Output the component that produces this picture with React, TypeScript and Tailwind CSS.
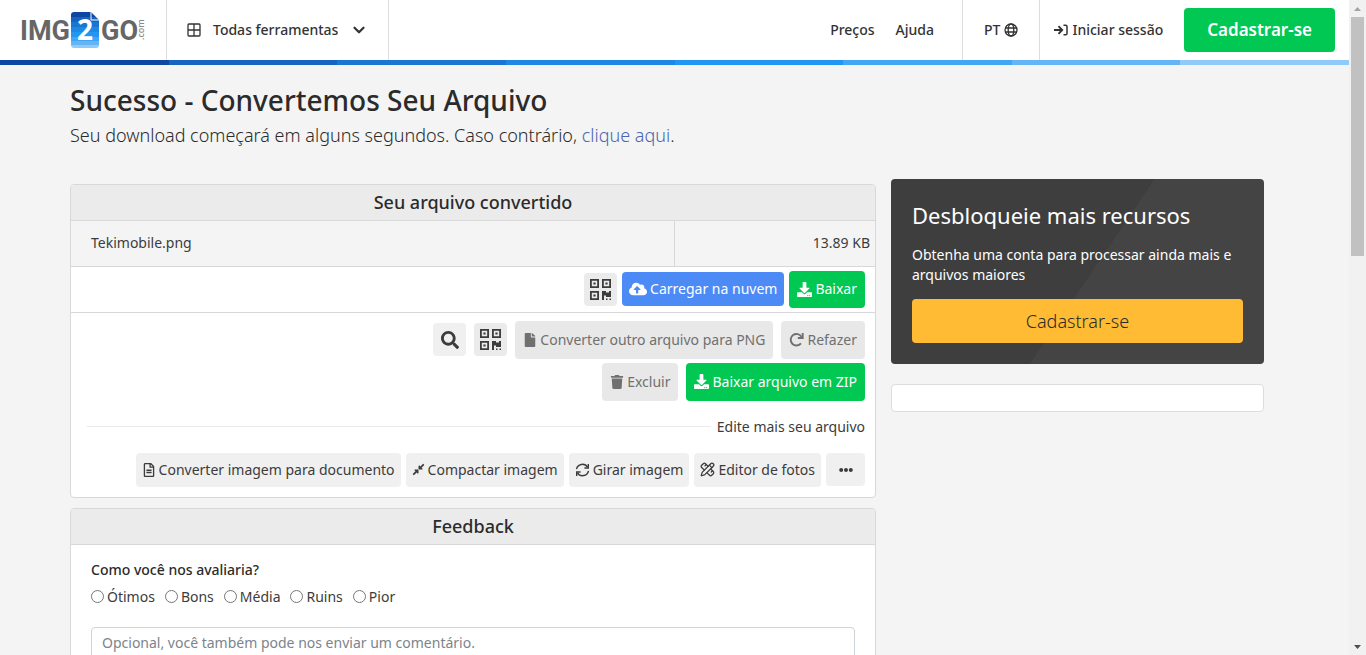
import type { ReactNode } from 'react';
import { ChevronDown, PencilRuler } from 'lucide-react';
import {
  FaSearch,
  FaFile,
  FaTrash,
  FaDownload,
  FaCloudUploadAlt,
  FaEllipsisH,
  FaRegFileAlt,
  FaCompressAlt,
} from 'react-icons/fa';

const stripes = [
  'bg-[#0d47a1]',
  'bg-[#1565c0]',
  'bg-[#1976d2]',
  'bg-[#1e88e5]',
  'bg-[#2196f3]',
  'bg-[#42a5f5]',
  'bg-[#64b5f6]',
  'bg-[#90caf9]',
];

const ratings = ['Ótimos', 'Bons', 'Média', 'Ruins', 'Pior'];

function Logo() {
  return (
    <a href="#" aria-label="IMG2GO.com" className="block">
      <svg width="130" height="38" viewBox="0 0 130 38">
        <defs>
          <clipPath id="sheet">
            <path d="M3 0h17l8 8v25a3 3 0 0 1-3 3H3a3 3 0 0 1-3-3V3a3 3 0 0 1 3-3z" />
          </clipPath>
        </defs>
        <g fontFamily="Roboto, sans-serif" fontWeight="700" fill="#666">
          <text x="0" y="29" fontSize="27">IMG</text>
          <text x="81" y="29" fontSize="27">GO</text>
        </g>
        <g transform="translate(51 1)">
          <g clipPath="url(#sheet)">
            <rect width="28" height="5" fill="#0d47a1" />
            <rect y="5" width="28" height="5" fill="#1565c0" />
            <rect y="10" width="28" height="5" fill="#1976d2" />
            <rect y="15" width="28" height="5" fill="#1e88e5" />
            <rect y="20" width="28" height="5" fill="#2196f3" />
            <rect y="25" width="28" height="4" fill="#42a5f5" />
            <rect y="29" width="28" height="4" fill="#64b5f6" />
            <rect y="33" width="28" height="4" fill="#90caf9" />
          </g>
          <path d="M20 0v8h8" fill="none" stroke="#fff" />
          <text x="14" y="28" fontSize="28" fontWeight="700" fontFamily="Open Sans, sans-serif" fill="#fff" textAnchor="middle">
            2
          </text>
        </g>
        <text transform="translate(124 29) rotate(-90)" fontSize="9" fontFamily="Noto Sans, sans-serif" fill="#888">
          .com
        </text>
      </svg>
    </a>
  );
}

function GridIcon() {
  return (
    <svg width="14" height="14" viewBox="0 0 14 14" fill="none" stroke="currentColor" strokeWidth="1.3">
      <rect x="1" y="1" width="12" height="12" rx="1" />
      <path d="M7 1v12M1 7h12" />
    </svg>
  );
}

function GlobeIcon() {
  return (
    <svg width="14" height="14" viewBox="0 0 14 14" fill="none" stroke="currentColor" strokeWidth="1.3">
      <circle cx="7" cy="7" r="6" />
      <ellipse cx="7" cy="7" rx="2.8" ry="6" />
      <path d="M1.4 5h11.2M1.4 9h11.2" />
    </svg>
  );
}

function SignInIcon() {
  return (
    <svg width="14" height="14" viewBox="0 0 14 14" fill="none" stroke="currentColor" strokeWidth="1.9">
      <path d="M0 7h7.5M4.5 3.2L8.2 7l-3.7 3.8" />
      <path strokeWidth="1.5" d="M9.5 2.2h2.2a1.3 1.3 0 0 1 1.3 1.3v7a1.3 1.3 0 0 1-1.3 1.3H9.5" />
    </svg>
  );
}

function QrIcon() {
  return (
    <svg width="21" height="21" viewBox="0 0 21 21" fill="currentColor">
      <path fillRule="evenodd" d="M0 0h9v9H0zM1.8 1.8v5.4h5.4V1.8z" />
      <path fillRule="evenodd" d="M12 0h9v9h-9zM13.8 1.8v5.4h5.4V1.8z" />
      <path fillRule="evenodd" d="M0 12h9v9H0zM1.8 13.8v5.4h5.4v-5.4z" />
      <path d="M3.4 3.4h2.2v2.2H3.4zM15.4 3.4h2.2v2.2h-2.2zM3.4 15.4h2.2v2.2H3.4z" />
      <path d="M12 12h4v1.5h3V12h2v6h-5v-1.5h-2V21h-2zM16 19.5h1.5V21H16zM19.5 19.5H21V21h-1.5z" />
    </svg>
  );
}

function RedoIcon() {
  return (
    <svg width="15" height="15" viewBox="0 0 15 15" fill="none" stroke="currentColor" strokeWidth="1.9">
      <path d="M12.6 5A5.8 5.8 0 1 0 12 11.4" />
      <path d="M13.7 1v5H8.8" />
    </svg>
  );
}

function SyncIcon() {
  return (
    <svg width="15" height="14" viewBox="0 0 14 14" fill="none" stroke="currentColor" strokeWidth="1.4">
      <path d="M1 6.2A6 6 0 0 1 12 4.2M13 7.8A6 6 0 0 1 2 9.8" />
      <path d="M12.8 1v4H8.9M1.2 13V9h3.9" />
    </svg>
  );
}

interface ButtonProps {
  icon: ReactNode;
  children?: ReactNode;
  label?: string;
  className: string;
}

function Button({ icon, children, label, className }: ButtonProps) {
  return (
    <button
      type="button"
      aria-label={label}
      className={`flex items-center justify-center gap-[3px] rounded whitespace-nowrap ${className}`}
    >
      {icon}
      {children}
    </button>
  );
}

function Header() {
  return (
    <header>
      <div className="flex h-15 items-stretch bg-white text-sm font-medium text-[#333]">
        <div className="flex items-center border-r border-[#ddd] pr-4 pl-5">
          <Logo />
        </div>
        <button type="button" className="flex items-center gap-3 border-r border-[#ddd] px-5">
          <GridIcon />
          <span>Todas ferramentas</span>
          <ChevronDown size={18} strokeWidth={3} />
        </button>
        <nav className="ml-auto flex items-stretch">
          <a href="#" className="flex items-center pr-[21px]">Preços</a>
          <a href="#" className="flex items-center border-r border-[#ddd] pr-7">Ajuda</a>
          <button type="button" className="flex items-center gap-1 border-r border-[#ddd] px-[21px]">
            PT <GlobeIcon />
          </button>
          <a href="#" className="flex items-center gap-1 pr-[21px] pl-3.5">
            <SignInIcon /> Iniciar sessão
          </a>
        </nav>
        <div className="flex items-center pr-3.5">
          <a href="#" className="flex h-11 items-center rounded bg-[#00c853] px-[23px] text-[17px] font-semibold text-white">
            Cadastrar-se
          </a>
        </div>
      </div>
      <div className="flex h-[5px]">
        {stripes.map((color) => (
          <div key={color} className={`flex-1 ${color}`} />
        ))}
      </div>
    </header>
  );
}

function PanelTitle({ children }: { children: ReactNode }) {
  return (
    <h2 className="border-b border-[#d8d8d8] bg-[#ebebeb] pt-1 pb-[5px] text-center text-lg leading-[26px] font-medium text-[#2b2b2b]">
      {children}
    </h2>
  );
}

function ConvertedFile() {
  return (
    <section className="overflow-hidden rounded border border-[#d8d8d8] bg-white">
      <PanelTitle>Seu arquivo convertido</PanelTitle>
      <table className="w-full border-b border-[#d8d8d8] bg-[#f4f4f4]">
        <tbody>
          <tr className="h-[45px]">
            <td className="w-3/4 border-r border-[#d8d8d8] pl-5">Tekimobile.png</td>
            <td className="pr-[5px] text-right">13.89 KB</td>
          </tr>
        </tbody>
      </table>
      <div className="flex items-center justify-end gap-[5px] border-b border-[#d8d8d8] px-2.5 py-1">
        <Button icon={<QrIcon />} label="Código QR" className="h-[33px] w-[33px] bg-[#ebebeb]" />
        <Button icon={<FaCloudUploadAlt size={18} />} className="h-[34px] bg-[#4c8bf5] px-[7px] text-white">
          Carregar na nuvem
        </Button>
        <Button icon={<FaDownload size={15} />} className="h-[37px] bg-[#00c853] px-2 text-white">
          Baixar
        </Button>
      </div>
      <div className="px-2.5 pt-2 pb-2.5">
        <div className="ml-auto flex max-w-[440px] flex-wrap items-center justify-end gap-x-2 gap-y-1">
          <Button icon={<FaSearch size={18} />} label="Visualizar" className="h-[33px] w-[33px] bg-[#f0f0f0]" />
          <Button icon={<QrIcon />} label="Código QR" className="h-[33px] w-[33px] bg-[#ebebeb]" />
          <Button icon={<FaFile className="h-3.5 w-auto" />} className="h-[38px] bg-[#e8e8e8] px-2 text-[#707070]">
            Converter outro arquivo para PNG
          </Button>
          <Button icon={<RedoIcon />} className="h-[38px] bg-[#e8e8e8] px-2 text-[#707070]">
            Refazer
          </Button>
          <Button icon={<FaTrash className="h-3.5 w-auto" />} className="h-[38px] bg-[#e8e8e8] px-2 text-[#707070]">
            Excluir
          </Button>
          <Button icon={<FaDownload size={15} />} className="h-[38px] bg-[#00c853] px-2 text-white">
            Baixar arquivo em ZIP
          </Button>
        </div>
        <div className="mt-4 ml-1.5 flex items-center gap-1.5">
          <div className="h-px flex-1 bg-[#ebebeb]" />
          <span>Edite mais seu arquivo</span>
        </div>
        <div className="mt-4 flex flex-wrap items-center justify-end gap-[5px]">
          <Button icon={<FaRegFileAlt className="h-3.5 w-auto" />} className="h-[34px] bg-[#f0f0f0] px-1.5">
            Converter imagem para documento
          </Button>
          <Button icon={<FaCompressAlt size={13} />} className="h-[34px] bg-[#f0f0f0] px-1.5">
            Compactar imagem
          </Button>
          <Button icon={<SyncIcon />} className="h-[34px] bg-[#f0f0f0] px-1.5">
            Girar imagem
          </Button>
          <Button icon={<PencilRuler size={15} />} className="h-[34px] bg-[#f0f0f0] px-1.5">
            Editor de fotos
          </Button>
          <Button icon={<FaEllipsisH size={14} />} label="Mais" className="h-[33px] w-[39px] bg-[#f0f0f0]" />
        </div>
      </div>
    </section>
  );
}

function Feedback() {
  return (
    <section className="mt-2.5 overflow-hidden rounded border border-[#d8d8d8] bg-white">
      <PanelTitle>Feedback</PanelTitle>
      <form className="p-5 pt-[15px]">
        <fieldset>
          <legend className="font-medium text-[#2b2b2b]">Como você nos avaliaria?</legend>
          <div className="mt-[7px] flex flex-wrap gap-2.5">
            {ratings.map((rating) => (
              <label key={rating} className="flex items-center gap-[3px]">
                <input type="radio" name="rating" value={rating} className="h-[13px] w-[13px]" />
                {rating}
              </label>
            ))}
          </div>
        </fieldset>
        <textarea
          aria-label="Comentário"
          rows={4}
          placeholder="Opcional, você também pode nos enviar um comentário."
          className="mt-5 block w-full rounded-sm border border-[#ced4da] px-2.5 py-[5px] placeholder:text-[#7c848b]"
        />
      </form>
    </section>
  );
}

function Upgrade() {
  return (
    <section className="rounded bg-[linear-gradient(124deg,#3e3e3e_53%,#444444_53%)] p-[21px] text-white">
      <h2 className="text-[22px] leading-[30px]">Desbloqueie mais recursos</h2>
      <p className="mt-[15px] leading-5">Obtenha uma conta para processar ainda mais e arquivos maiores</p>
      <a
        href="#"
        className="mt-3.5 flex h-11 items-center justify-center rounded bg-[#ffbb33] text-lg font-light text-[#2b2b2b]"
      >
        Cadastrar-se
      </a>
    </section>
  );
}

function ScrollTrack() {
  return (
    <div className="flex w-[17px] flex-col items-center justify-between bg-[#f1f1f1]" aria-hidden="true">
      <div className="flex w-full flex-col items-center">
        <svg width="17" height="17" viewBox="0 0 17 17">
          <path d="M5 11h7L8.5 7z" fill="#a3a3a3" />
        </svg>
        <div className="h-[239px] w-[13px] bg-[#c1c1c1]" />
      </div>
      <svg width="17" height="17" viewBox="0 0 17 17">
        <path d="M5 7h7l-3.5 4z" fill="#505050" />
      </svg>
    </div>
  );
}

export default function App() {
  return (
    <div className="flex h-screen overflow-hidden bg-[#f4f4f4] font-['Noto_Sans','Open_Sans',sans-serif] text-sm text-[#3c3c3c]">
      <div className="min-w-0 flex-1 overflow-hidden">
        <Header />
        <main className="pt-4 pr-[85px] pl-[70px]">
          <h1 className="text-[28px] leading-[38px] font-medium text-[#2b2b2b]">Sucesso - Convertemos Seu Arquivo</h1>
          <p className="text-lg leading-8 font-light text-[#2b2b2b]">
            Seu download começará em alguns segundos. Caso contrário,{' '}
            <a href="#" className="text-[#4a67b0]">clique aqui</a>.
          </p>
          <div className="mt-7 flex items-start gap-[15px]">
            <div className="min-w-0 flex-1 pt-[5px]">
              <ConvertedFile />
              <Feedback />
            </div>
            <aside className="w-[373px] shrink-0">
              <Upgrade />
              <div className="mt-5 h-7 rounded border border-[#ddd] bg-white" />
            </aside>
          </div>
        </main>
      </div>
      <ScrollTrack />
    </div>
  );
}
